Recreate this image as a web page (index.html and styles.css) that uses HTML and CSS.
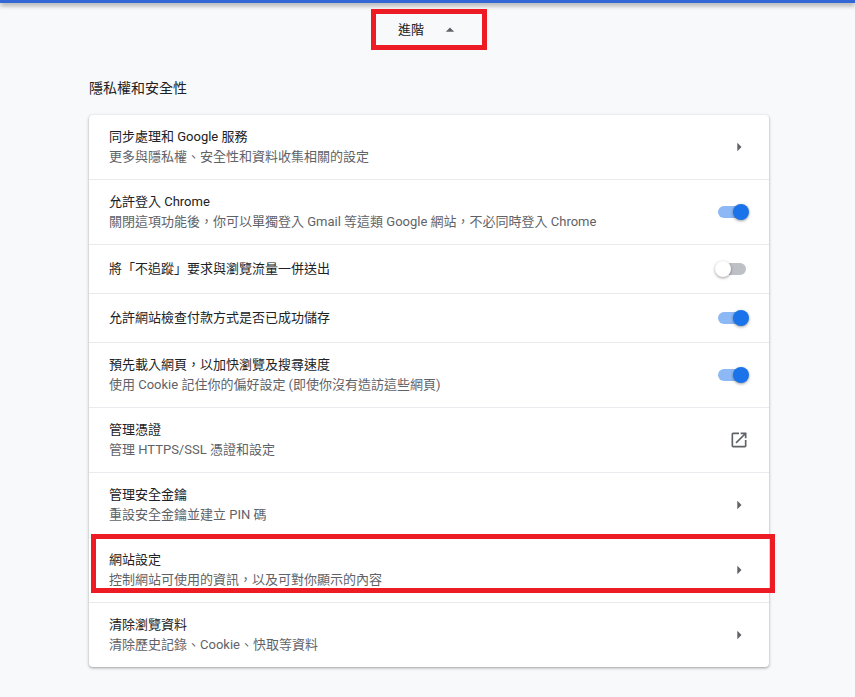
FILE: index.html
```
<!DOCTYPE html>
<html lang="zh-Hant">
<head>
    <meta charset="UTF-8">
    <meta name="viewport" content="width=device-width, initial-scale=1.0">
    <title>設定</title>
    <link rel="stylesheet" href="styles.css">
</head>
<body>
    <div class="toolbar"></div>
    <main class="settings">
        <button class="advanced" type="button" aria-expanded="true">
            進階
            <svg class="icon" viewBox="0 0 24 24" aria-hidden="true"><path d="M7 14l5-5 5 5z"/></svg>
        </button>

        <h2>隱私權和安全性</h2>

        <div class="card">
            <div class="row">
                <div class="text">
                    <div class="title" id="sync">同步處理和 Google 服務</div>
                    <div class="sub">更多與隱私權、安全性和資料收集相關的設定</div>
                </div>
                <button class="icon-btn" type="button" aria-labelledby="sync">
                    <svg class="icon" viewBox="0 0 24 24"><path d="M10 17l5-5-5-5z"/></svg>
                </button>
            </div>
            <div class="row">
                <label class="text" for="signin">
                    <span class="title">允許登入 Chrome</span>
                    <span class="sub">關閉這項功能後，你可以單獨登入 Gmail 等這類 Google 網站，不必同時登入 Chrome</span>
                </label>
                <input class="toggle" type="checkbox" id="signin" checked>
            </div>
            <div class="row single">
                <label class="text" for="dnt">
                    <span class="title">將「不追蹤」要求與瀏覽流量一併送出</span>
                </label>
                <input class="toggle" type="checkbox" id="dnt">
            </div>
            <div class="row single">
                <label class="text" for="payment">
                    <span class="title">允許網站檢查付款方式是否已成功儲存</span>
                </label>
                <input class="toggle" type="checkbox" id="payment" checked>
            </div>
            <div class="row">
                <label class="text" for="preload">
                    <span class="title">預先載入網頁，以加快瀏覽及搜尋速度</span>
                    <span class="sub">使用 Cookie 記住你的偏好設定 (即使你沒有造訪這些網頁)</span>
                </label>
                <input class="toggle" type="checkbox" id="preload" checked>
            </div>
            <div class="row">
                <div class="text">
                    <div class="title" id="certs">管理憑證</div>
                    <div class="sub">管理 HTTPS/SSL 憑證和設定</div>
                </div>
                <button class="icon-btn" type="button" aria-labelledby="certs">
                    <svg class="icon" viewBox="0 0 24 24"><path d="M19 19H5V5h7V3H5a2 2 0 0 0-2 2v14a2 2 0 0 0 2 2h14c1.1 0 2-.9 2-2v-7h-2v7zM14 3v2h3.59l-9.83 9.83 1.41 1.41L19 6.41V10h2V3h-7z"/></svg>
                </button>
            </div>
            <div class="row">
                <div class="text">
                    <div class="title" id="keys">管理安全金鑰</div>
                    <div class="sub">重設安全金鑰並建立 PIN 碼</div>
                </div>
                <button class="icon-btn" type="button" aria-labelledby="keys">
                    <svg class="icon" viewBox="0 0 24 24"><path d="M10 17l5-5-5-5z"/></svg>
                </button>
            </div>
            <div class="row marked">
                <div class="text">
                    <div class="title" id="site">網站設定</div>
                    <div class="sub">控制網站可使用的資訊，以及可對你顯示的內容</div>
                </div>
                <button class="icon-btn" type="button" aria-labelledby="site">
                    <svg class="icon" viewBox="0 0 24 24"><path d="M10 17l5-5-5-5z"/></svg>
                </button>
            </div>
            <div class="row">
                <div class="text">
                    <div class="title" id="clear">清除瀏覽資料</div>
                    <div class="sub">清除歷史記錄、Cookie、快取等資料</div>
                </div>
                <button class="icon-btn" type="button" aria-labelledby="clear">
                    <svg class="icon" viewBox="0 0 24 24"><path d="M10 17l5-5-5-5z"/></svg>
                </button>
            </div>
        </div>
    </main>
</body>
</html>
```
FILE: styles.css
```
* {
    box-sizing: border-box;
}

body {
    margin: 0;
    background-color: #f8f9fa;
    color: #202124;
    font-family: Roboto, "Noto Sans CJK TC", sans-serif;
    font-size: 13px;
    line-height: 20px;
}

.toolbar {
    height: 3px;
    background: #3367d6;
    box-shadow: 0 2px 5px rgba(0, 0, 0, 0.5);
}

.settings {
    display: flex;
    flex-direction: column;
    align-items: center;
    padding: 6px 0 30px 3px;
}

.advanced {
    display: flex;
    align-items: center;
    gap: 16px;
    height: 41px;
    padding: 0 22px;
    border: 5px solid #ed1c24;
    background: none;
    color: inherit;
    font: inherit;
    cursor: pointer;
}

.icon {
    display: block;
    width: 20px;
    height: 20px;
    fill: #5f6368;
}

h2 {
    width: 100%;
    max-width: 680px;
    margin: 28px 0 17px;
    font-size: 14px;
    font-weight: normal;
    line-height: 20px;
}

.card {
    width: 100%;
    max-width: 680px;
    background: #fff;
    border-radius: 4px;
    box-shadow: 0 1px 2px rgba(60, 64, 67, 0.3), 0 1px 3px 1px rgba(60, 64, 67, 0.15);
}

.row {
    position: relative;
    display: flex;
    align-items: center;
    min-height: 65px;
    padding: 0 20px;
    border-top: 1px solid #e8eaed;
}

.row.single {
    min-height: 49px;
}

.row:first-child {
    min-height: 64px;
    border-top: none;
}

.text {
    flex: 1;
}

.title,
.sub {
    display: block;
}

.sub {
    color: #5f6368;
}

.icon-btn {
    padding: 0;
    border: none;
    background: none;
    cursor: pointer;
}

/* red frame over the row */
.marked::after {
    content: "";
    position: absolute;
    top: -4px;
    right: -6px;
    bottom: 9px;
    left: 2px;
    border: 5px solid #ed1c24;
    pointer-events: none;
}

.toggle {
    appearance: none;
    position: relative;
    display: flex;
    align-items: center;
    width: 34px;
    height: 16px;
    margin: 0;
    padding: 0 3px;
    cursor: pointer;
}

.toggle::before {
    content: "";
    width: 28px;
    height: 12px;
    border-radius: 6px;
    background: #bdc1c6;
}

.toggle::after {
    content: "";
    position: absolute;
    top: 0;
    left: 0;
    width: 16px;
    height: 16px;
    border-radius: 50%;
    background: #fff;
    box-shadow: 0 1px 3px rgba(0, 0, 0, 0.4);
}

.toggle:checked::before {
    background: #8cb8f5;
}

.toggle:checked::after {
    left: 18px;
    background: #1a73e8;
}
```
